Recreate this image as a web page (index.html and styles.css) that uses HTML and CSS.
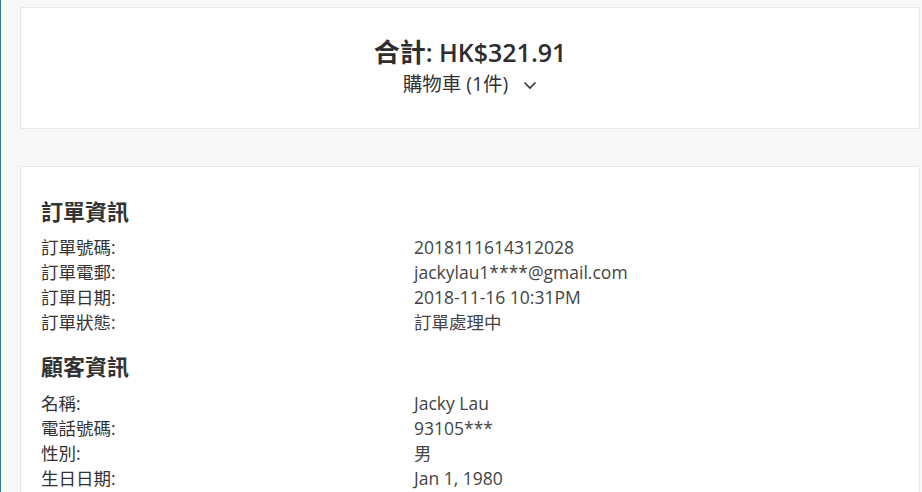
FILE: index.html
```html
<!DOCTYPE html>
<html lang="zh-Hant">
<head>
<meta charset="utf-8">
<title>訂單</title>
<link rel="stylesheet" href="styles.css">
</head>
<body>
<div class="page">
  <section class="card summary">
    <div class="total"><span class="cjk-b">合計</span>: HK$321.91</div>
    <div class="cart">購物車 (1件)
      <svg class="chev" width="14" height="9" viewBox="0 0 14 9"><path d="M1.5 1.5 L7 7 L12.5 1.5" fill="none" stroke="#333" stroke-width="1.6"/></svg>
    </div>
  </section>
  <section class="card details">
    <h2 class="heading">訂單資訊</h2>
    <dl class="rows">
      <dt>訂單號碼:</dt><dd>2018111614312028</dd>
      <dt>訂單電郵:</dt><dd>jackylau1****@gmail.com</dd>
      <dt>訂單日期:</dt><dd>2018-11-16 10:31PM</dd>
      <dt>訂單狀態:</dt><dd>訂單處理中</dd>
    </dl>
    <h2 class="heading second">顧客資訊</h2>
    <dl class="rows">
      <dt>名稱:</dt><dd>Jacky Lau</dd>
      <dt>電話號碼:</dt><dd>93105***</dd>
      <dt>性別:</dt><dd>男</dd>
      <dt>生日日期:</dt><dd>Jan 1, 1980</dd>
    </dl>
  </section>
</div>
</body>
</html>
```
FILE: styles.css
```css
html, body {
  margin: 0;
  padding: 0;
}
body {
  background: #f6f7f8;
  border-left: 1px solid #2b7ba3;
  min-height: 492px;
  box-sizing: border-box;
  font-family: "Open Sans", "Noto Sans CJK TC", sans-serif;
  color: #333;
  overflow: hidden;
}
.page {
  padding: 7px 2px 0 19px;
  display: flex;
  flex-direction: column;
  gap: 37px;
}
.card {
  background: #fff;
  border: 1px solid #e6e7e8;
}
.summary {
  padding: 28px 0 28px;
  text-align: center;
}
.total {
  font-size: 25px;
  font-weight: 600;
  line-height: 32px;
  color: #2e2e2e;
}
.cjk-b {
  font-weight: 700;
  font-size: 26px;
}
.cart {
  font-size: 19.5px;
  line-height: 32px;
  color: #333;
  display: flex;
  justify-content: center;
  align-items: center;
  gap: 15px;
}
.chev {
  margin-top: 2px;
}
.details {
  padding: 29px 20px 20px;
}
.heading {
  margin: 0 0 9px;
  font-size: 22px;
  line-height: 30px;
  font-weight: 700;
  color: #333;
}
.heading.second {
  margin: 16px 0 10px;
}
.rows {
  margin: 0;
  display: grid;
  grid-template-columns: 373px 1fr;
  font-size: 17.5px;
  line-height: 25px;
}
.rows dt, .rows dd {
  margin: 0;
}
.rows dt {
  color: #333;
}
.rows dd {
  color: #444;
}
```
